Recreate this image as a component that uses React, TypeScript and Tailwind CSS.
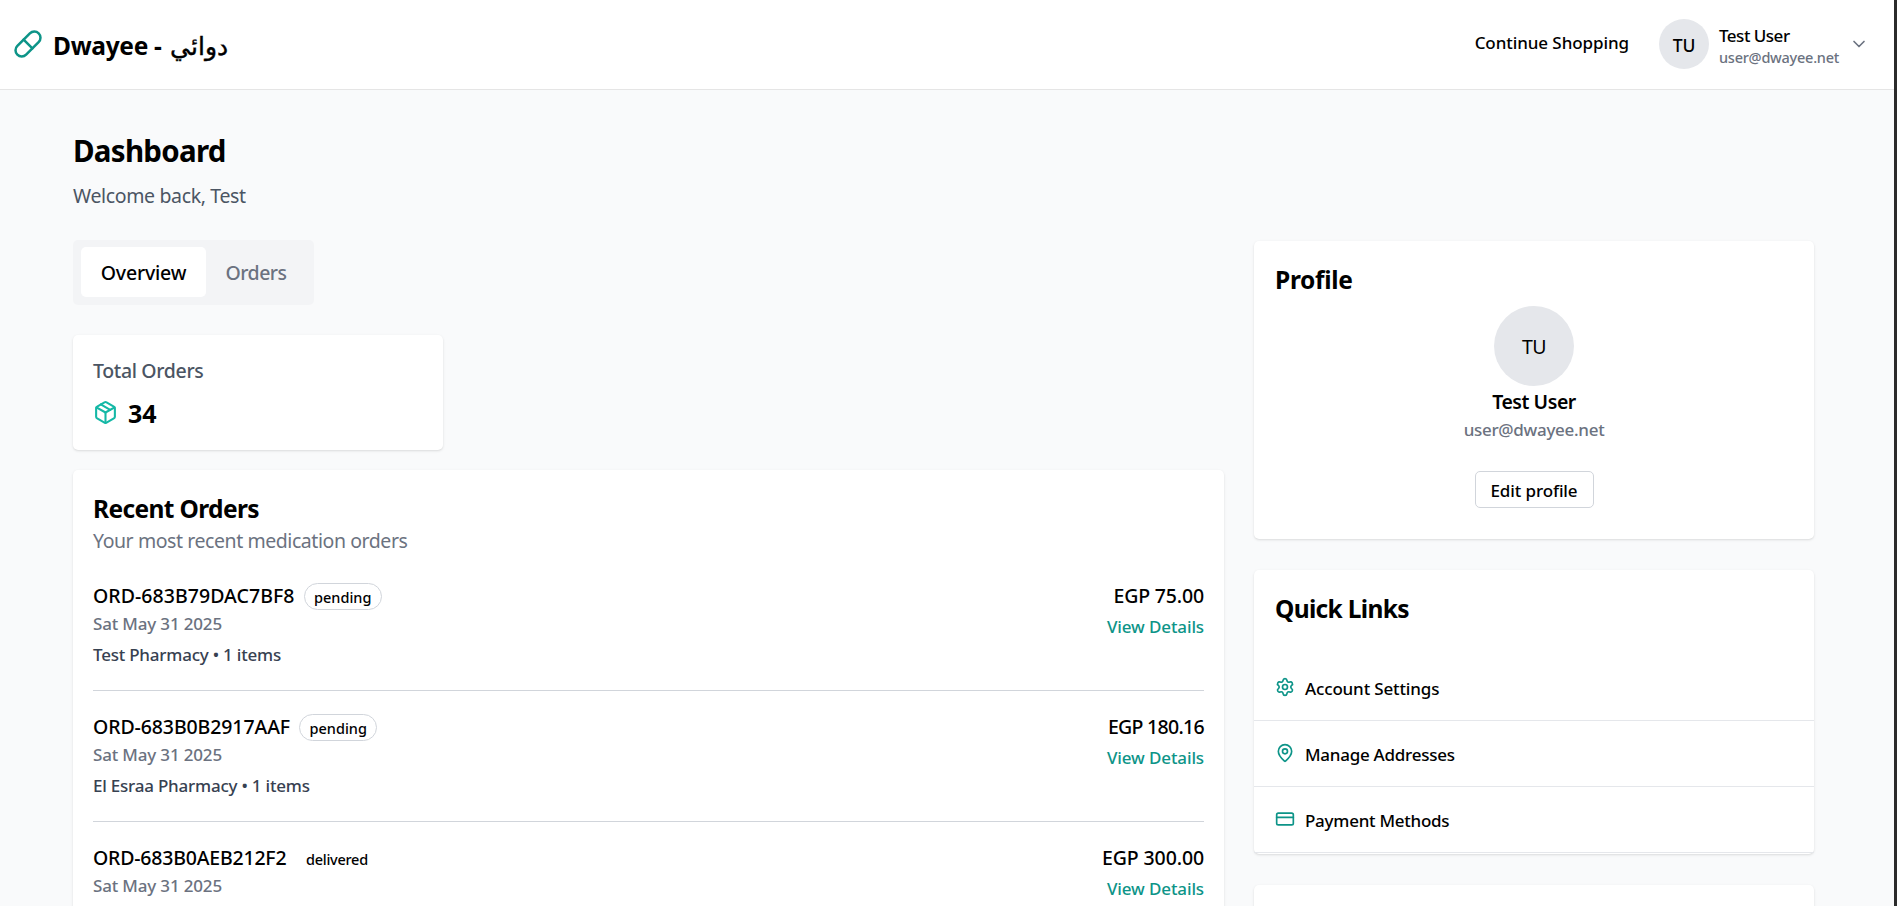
import { ChevronDown, CreditCard, MapPin, Package, Pill, Settings } from 'lucide-react';
import type { ReactNode } from 'react';

type Order = {
  id: string;
  idTracking: string;
  status: string;
  badge: string;
  pharmacy: string;
  total: string;
  totalTracking: string;
};

const orders: Order[] = [
  {
    id: 'ORD-683B79DAC7BF8',
    idTracking: 'tracking-[0.05px]',
    status: 'pending',
    badge: 'border-[#d1d5db]',
    pharmacy: 'Test Pharmacy • 1 items',
    total: 'EGP 75.00',
    totalTracking: 'tracking-[-0.15px]',
  },
  {
    id: 'ORD-683B0B2917AAF',
    idTracking: 'tracking-[-0.1px]',
    status: 'pending',
    badge: 'border-[#d1d5db]',
    pharmacy: 'El Esraa Pharmacy • 1 items',
    total: 'EGP 180.16',
    totalTracking: 'tracking-[-0.7px]',
  },
  {
    id: 'ORD-683B0AEB212F2',
    idTracking: 'tracking-[-0.2px]',
    status: 'delivered',
    badge: 'border-transparent tracking-[-0.25px]',
    pharmacy: 'El Esraa Pharmacy • 1 items',
    total: 'EGP 300.00',
    totalTracking: 'tracking-[-0.1px]',
  },
];

const links = [
  { label: 'Account Settings', icon: Settings, tracking: 'tracking-[-0.15px]' },
  { label: 'Manage Addresses', icon: MapPin, tracking: 'tracking-[-0.26px]' },
  { label: 'Payment Methods', icon: CreditCard, tracking: 'tracking-[-0.26px]' },
];

function Card({ className, children }: { className: string; children?: ReactNode }) {
  return (
    <section className={`rounded-[5px] bg-white shadow-[0_1px_3px_rgba(0,0,0,0.1),0_1px_2px_-1px_rgba(0,0,0,0.1)] ${className}`}>
      {children}
    </section>
  );
}

function Header() {
  return (
    <header className="flex h-[90px] shrink-0 items-center justify-between border-b border-[#e5e5e5] bg-white pr-[25px] pb-px pl-[13px]">
      <a className="flex items-center gap-[10px]">
        <Pill size={30} className="text-[#0d9488]" />
        <span className="mt-[3px] flex h-[35px] gap-[8px] text-[24.5px] leading-[35px] font-bold whitespace-nowrap">
          <span className="tracking-[-0.3px]">Dwayee -</span>
          <span dir="rtl" className="text-[25px] font-normal [-webkit-text-stroke:0.4px_black]">دوائي</span>
        </span>
      </a>
      <div className="flex items-center">
        <a className="mr-[30px] -mt-[4px] text-[17px] leading-[25px] font-medium tracking-[-0.08px]">Continue Shopping</a>
        <div className="mr-[10px] flex size-[50px] items-center justify-center rounded-full bg-[#e5e7eb] text-[17.5px] leading-[25px] font-medium">
          <span className="mt-[3px]">TU</span>
        </div>
        <div className="mt-[4px] flex w-[120px] flex-col">
          <span className="text-[17px] leading-[22px] font-medium tracking-[-0.5px]">Test User</span>
          <span className="text-[14.5px] leading-[21px] font-medium tracking-[-0.25px] text-[#6b7280]">user@dwayee.net</span>
        </div>
        <ChevronDown size={20} className="ml-[10px] text-[#6b7280]" />
      </div>
    </header>
  );
}

function OrderRow({ order, last }: { order: Order; last: boolean }) {
  return (
    <li className={`flex h-[110px] justify-between ${last ? '' : 'border-b border-[#d1d5db]'}`}>
      <div>
        <div className="flex h-[30px] items-center gap-[9px]">
          <span className={`text-[19.5px] leading-[30px] font-medium ${order.idTracking}`}>{order.id}</span>
          <span className={`mt-px flex h-[27px] items-center rounded-full border px-[9.5px] text-[14.5px] leading-[20px] font-medium ${order.badge}`}>
            <span>{order.status}</span>
          </span>
        </div>
        <div className="text-[17px] leading-[25px] font-medium tracking-[-0.17px] text-[#6b7280]">Sat May 31 2025</div>
        <div className="mt-[6px] text-[17px] leading-[25px] font-medium tracking-[-0.22px] text-[#374151]">{order.pharmacy}</div>
      </div>
      <div className="flex flex-col items-end">
        <span className={`text-[19.5px] leading-[30px] font-medium ${order.totalTracking}`}>{order.total}</span>
        <a className="mt-[3px] text-[17px] leading-[25px] font-medium tracking-[-0.12px] text-[#0d9488]">View Details</a>
      </div>
    </li>
  );
}

export default function App() {
  return (
    <div className="flex h-[906px] flex-col overflow-hidden border-r-[3px] border-[#2b2b2b] bg-[#f9fafb] font-['Noto_Sans','Open_Sans',sans-serif] text-black">
      <Header />
      <main className="flex flex-col px-[73px] pt-[41px]">
        <h1 className="text-[29.5px] leading-[40px] font-bold tracking-[-0.72px]">Dashboard</h1>
        <p className="mt-[10px] text-[19.5px] leading-[30px] tracking-[-0.35px] text-[#4b5563]">Welcome back, Test</p>
        <div className="mt-[29px] flex gap-[30px]">
          <div className="flex w-[1151px] shrink-0 flex-col">
            <div className="flex h-[65px] w-[241px] rounded-[5px] bg-[#f3f4f6] px-[8px] py-[7px] text-[19.5px] leading-[30px] font-medium">
              <button className="flex h-[50px] w-[125px] items-center justify-center rounded-[5px] bg-white pt-[2px] tracking-[-0.2px]">Overview</button>
              <button className="flex h-[50px] w-[100px] items-center justify-center pt-[2px] tracking-[-0.5px] text-[#6b7280]">Orders</button>
            </div>
            <Card className="mt-[30px] h-[115px] w-[370px] p-[20px] pt-[21px]">
              <h2 className="text-[19.5px] leading-[30px] font-medium tracking-[-0.35px] text-[#4b5563]">Total Orders</h2>
              <div className="mt-[8px] flex items-center gap-[10px]">
                <Package size={25} className="text-[#14b8a6]" />
                <span className="mt-[2px] text-[25px] leading-[35px] font-bold">34</span>
              </div>
            </Card>
            <Card className="mt-[20px] h-[620px] p-[20px]">
              <h2 className="text-[24.5px] leading-[37px] font-bold tracking-[-0.63px]">Recent Orders</h2>
              <p className="-mt-px text-[19.5px] leading-[30px] tracking-[-0.43px] text-[#6b7280]">Your most recent medication orders</p>
              <ul className="mt-[25px] flex flex-col gap-[21px]">
                {orders.map((order, i) => (
                  <OrderRow key={order.id} order={order} last={i === orders.length - 1} />
                ))}
              </ul>
            </Card>
          </div>
          <div className="mt-px flex w-[560px] shrink-0 flex-col">
            <Card className="h-[298px] px-[20px] pt-[20px]">
              <h2 className="pl-px text-[24.5px] leading-[38px] font-bold tracking-[-0.3px]">Profile</h2>
              <div className="mt-[7px] flex flex-col items-center">
                <div className="flex size-[80px] items-center justify-center rounded-full bg-[#e5e7eb] pt-[2px] text-[19.5px] leading-[30px] tracking-[-0.5px]">TU</div>
                <div className="mt-px text-[19.5px] leading-[30px] font-semibold tracking-[-0.45px]">Test User</div>
                <div className="text-[17px] leading-[25px] font-medium tracking-[-0.3px] text-[#6b7280]">user@dwayee.net</div>
                <button className="mt-[29px] flex h-[37px] w-[119px] items-center justify-center rounded-[5px] border border-[#d1d5db] bg-white pt-px text-[17px] leading-[25px] font-medium tracking-[-0.11px]">
                  Edit profile
                </button>
              </div>
            </Card>
            <Card className="mt-[31px] h-[284px] pt-[20px]">
              <h2 className="pr-[20px] pl-[21px] text-[24.5px] leading-[37px] font-bold tracking-[-0.67px]">Quick Links</h2>
              <ul className="mt-[28px]">
                {links.map(({ label, icon: Icon, tracking }) => (
                  <li key={label} className="flex h-[66px] items-center gap-[10px] border-b border-[#e5e7eb] pr-[20px] pb-[2px] pl-[21px]">
                    <Icon size={20} className="text-[#0d9488]" />
                    <span className={`mt-[3px] text-[17px] leading-[25px] font-medium ${tracking}`}>{label}</span>
                  </li>
                ))}
              </ul>
            </Card>
            <Card className="mt-[31px] h-[200px]" />
          </div>
        </div>
      </main>
    </div>
  );
}
